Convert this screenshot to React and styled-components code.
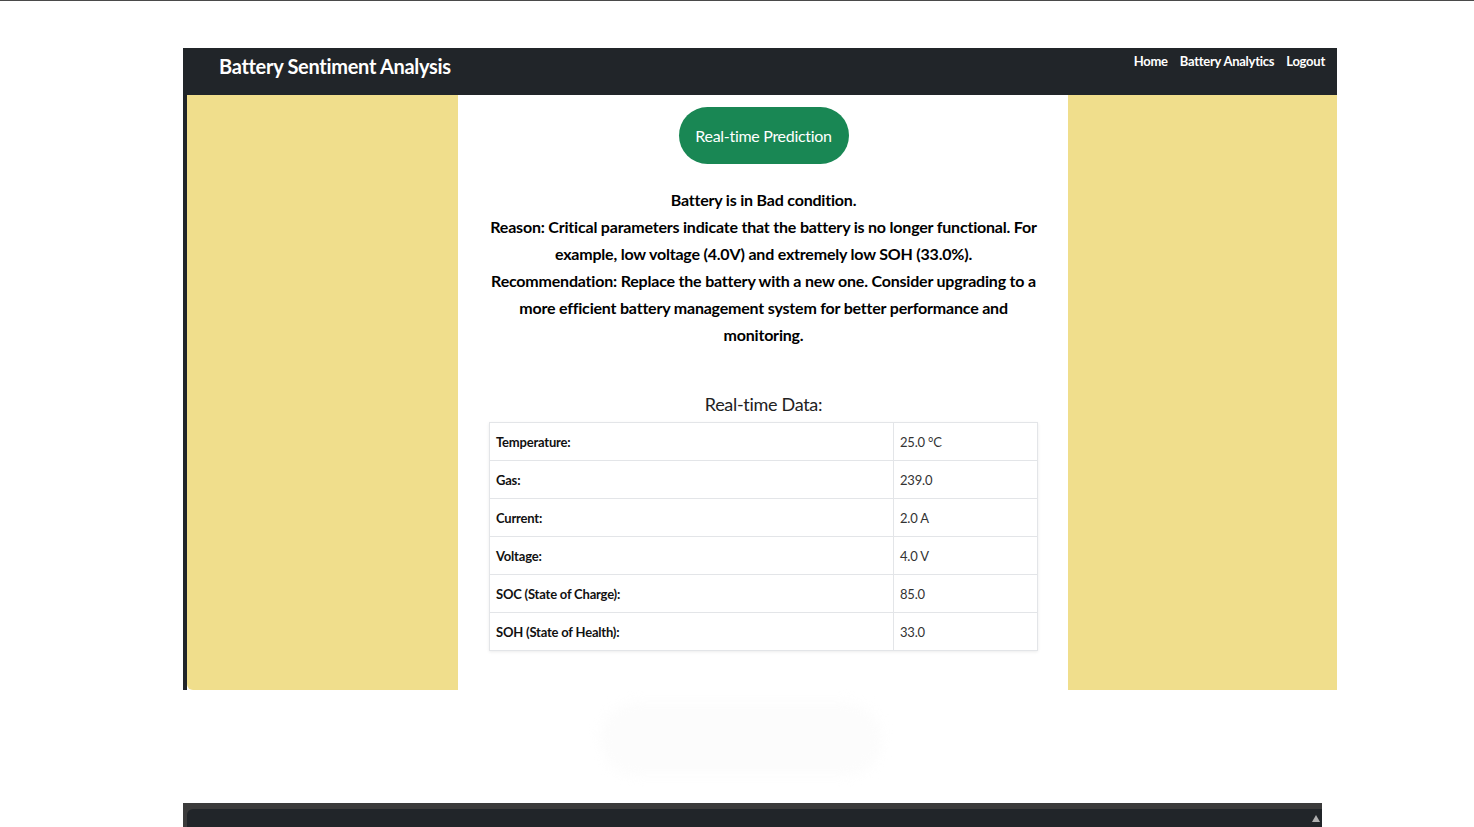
import React from 'react'
import styled, { createGlobalStyle } from 'styled-components'

const dark = '#212529'
const sand = '#f0de8c'
const success = '#198754'
const line = '#e3e5e8'

const data = {
    verdict: 'Battery is in Bad condition.',
    reason: 'Reason: Critical parameters indicate that the battery is no longer functional. For example, low voltage (4.0V) and extremely low SOH (33.0%).',
    recommendation: 'Recommendation: Replace the battery with a new one. Consider upgrading to a more efficient battery management system for better performance and monitoring.',
    readings: [
        { label: 'Temperature:', value: '25.0 °C' },
        { label: 'Gas:', value: '239.0' },
        { label: 'Current:', value: '2.0 A' },
        { label: 'Voltage:', value: '4.0 V' },
        { label: 'SOC (State of Charge):', value: '85.0' },
        { label: 'SOH (State of Health):', value: '33.0' },
    ],
}

const GlobalStyle = createGlobalStyle`
    html, body {
        margin: 0;
        padding: 0;
        background: #ffffff;
    }

    body {
        font-family: Lato, 'Open Sans', sans-serif;
        color: #000;
        overflow: hidden;
    }
`

const App = () => {
    return (
        <Page>
            <GlobalStyle />

            <Frame>
                <Navbar>
                    <Brand>Battery Sentiment Analysis</Brand>
                    <NavLinks>
                        <NavLink>Home</NavLink>
                        <NavLink>Battery Analytics</NavLink>
                        <NavLink>Logout</NavLink>
                    </NavLinks>
                </Navbar>

                <Body>
                    <Sidebar rounded />

                    <Main>
                        <PredictButton>Real-time Prediction</PredictButton>

                        <Message>
                            <p>{data.verdict}</p>
                            <p>{data.reason}</p>
                            <p>{data.recommendation}</p>
                        </Message>

                        <TableHeading>Real-time Data:</TableHeading>

                        <Table>
                            <tbody>
                                {data.readings.map((row, i) => (
                                    <tr key={i}>
                                        <th>{row.label}</th>
                                        <td>{row.value}</td>
                                    </tr>
                                ))}
                            </tbody>
                        </Table>
                    </Main>

                    <Sidebar />
                </Body>
            </Frame>

            <Ghost />

            <Footer>
                <FooterInner>
                    <ScrollArrow />
                </FooterInner>
            </Footer>
        </Page>
    )
}

const Page = styled.div`
    height: 827px;
    border-top: 1px solid #4a4a4a;
    box-sizing: border-box;
    padding-top: 47px;
    display: flex;
    flex-direction: column;
`

const Frame = styled.div`
    margin-left: 183px;
    width: 1154px;
`

const Navbar = styled.nav`
    height: 47px;
    background: ${dark};
    display: flex;
    justify-content: space-between;
    align-items: flex-start;
    padding: 0 12px 0 36px;
    box-sizing: border-box;
`

const Brand = styled.div`
    margin-top: 5px;
    font-size: 20px;
    font-weight: 700;
    line-height: 26px;
    color: #fff;
    letter-spacing: -0.3px;
`

const NavLinks = styled.div`
    display: flex;
    gap: 12px;
    margin-top: 4px;
`

const NavLink = styled.a`
    font-size: 13px;
    font-weight: 700;
    line-height: 18px;
    color: #fff;
    letter-spacing: -0.25px;
    cursor: pointer;
`

const Body = styled.div`
    height: 595px;
    display: grid;
    grid-template-columns: 271px 610px 269px;
    border-left: 4px solid ${dark};
`

const Sidebar = styled.div`
    background: ${sand};
    border-bottom-left-radius: ${props => props.rounded ? '6px' : '0'};
`

const Main = styled.div`
    background: #fff;
    padding: 12px 30px 0 31px;
    display: flex;
    flex-direction: column;
    align-items: center;
`

const PredictButton = styled.button`
    width: 170px;
    height: 57px;
    border: none;
    border-radius: 29px;
    background: ${success};
    color: #fff;
    font-family: inherit;
    font-size: 16px;
    letter-spacing: -0.3px;
    cursor: pointer;
`

const Message = styled.div`
    margin: 22px -3px 0;
    align-self: stretch;
    text-align: center;
    font-size: 16px;
    font-weight: 700;
    line-height: 27px;
    letter-spacing: -0.2px;

    p {
        margin: 0;
    }
`

const TableHeading = styled.div`
    margin-top: 44px;
    font-size: 18px;
    line-height: 24px;
    color: #222;
    letter-spacing: -0.3px;
`

const Table = styled.table`
    margin-top: 6px;
    width: 100%;
    border-collapse: collapse;
    box-shadow: 0 1px 3px rgba(0, 0, 0, 0.08);

    th, td {
        height: 37px;
        padding: 0 6px;
        border: 1px solid ${line};
        text-align: left;
        font-size: 13px;
        letter-spacing: -0.2px;
    }

    th {
        width: 391px;
        font-weight: 700;
        color: #111;
    }

    td {
        font-weight: 400;
        color: #333;
    }
`

const Ghost = styled.div`
    margin: 12px 0 0 600px;
    width: 282px;
    height: 74px;
    border-radius: 40px;
    background: #fcfcfc;
    filter: blur(6px);
`

const Footer = styled.div`
    margin-top: auto;
    margin-left: 183px;
    width: 1139px;
    height: 24px;
    background: #3b3b3b;
    padding: 6px 0 0 4px;
    box-sizing: border-box;
`

const FooterInner = styled.div`
    height: 100%;
    background: ${dark};
    border-top-left-radius: 6px;
    display: flex;
    justify-content: flex-end;
    align-items: center;
    padding-right: 2px;
`

const ScrollArrow = styled.div`
    width: 0;
    height: 0;
    border-left: 4px solid transparent;
    border-right: 4px solid transparent;
    border-bottom: 7px solid #b0b0b0;
`

export default App
